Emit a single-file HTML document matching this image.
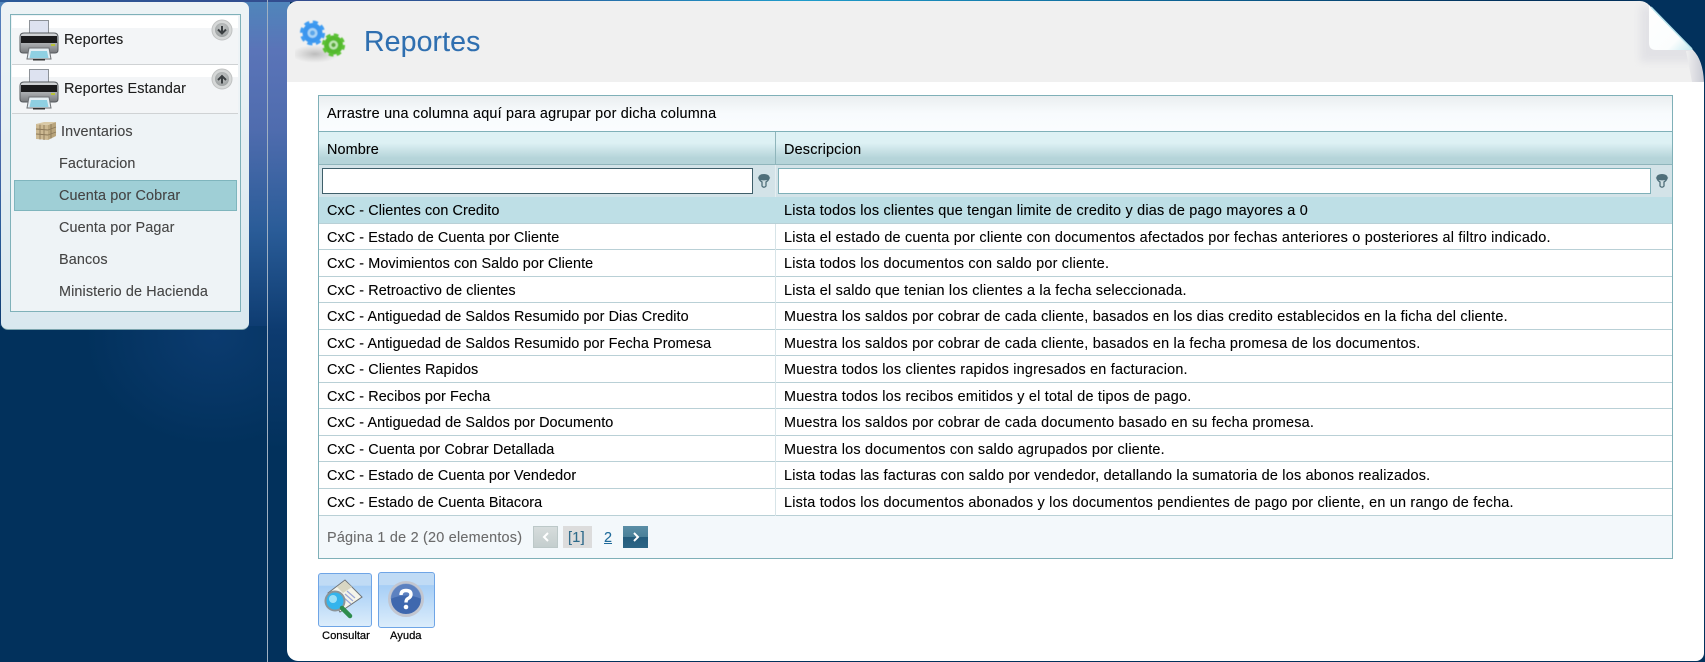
<!DOCTYPE html>
<html lang="es"><head><meta charset="utf-8"><title>Reportes</title>
<style>
html,body{margin:0;padding:0;width:1705px;height:662px;overflow:hidden;background:#02315c}
body{position:relative;font-family:"Liberation Sans",sans-serif;font-size:14.4px;color:#000}
.a{position:absolute}
.t{position:absolute;white-space:nowrap;line-height:18px;height:18px;-webkit-text-stroke:.1px currentColor}
.l{left:327px;letter-spacing:.08px}
.r{left:784px;letter-spacing:.22px}
.row{position:absolute;left:319px;width:1353px;border-bottom:1px solid #b9d0d6;background:#fff;box-sizing:border-box}
.m{color:#444;letter-spacing:.12px}
</style></head><body>
<div class="a" style="left:0;top:0;width:290px;height:662px;background:linear-gradient(180deg,#4f86bb 0,#5a74b8 50px,#4f6cae 130px,#2a5c98 230px,#0d3b70 330px,#02315c 450px)"></div>
<div class="a" style="left:0;top:326px;width:267px;height:336px;background:radial-gradient(ellipse 130px 110px at 215px 10px,#0b3b6f 0,#02315c 100%)"></div>
<div class="a" style="left:0;top:0;width:1705px;height:2px;background:linear-gradient(90deg,#2a5a98 0,#334c8e 300px,#2a5a9a 500px,#1f9ccb 800px,#0c5f90 1200px,#02315c 1500px)"></div>
<div class="a" style="left:267px;top:0;width:1px;height:662px;background:#9fb0c2"></div>

<!-- left panel -->
<div class="a" style="left:1px;top:2px;width:248px;height:328px;border-radius:7px;background:linear-gradient(180deg,#edf3f5,#d9e8ef);border-bottom:1px solid #7aa3ad;box-sizing:border-box"></div>
<div class="a" style="left:10px;top:14px;width:231px;height:298px;border:1px solid #7fb1b9;box-sizing:border-box;background:#eef3f6"></div>
<div class="a" style="left:12px;top:16px;width:226px;height:49px;background:linear-gradient(180deg,#fff 0,#fff 12px,#f3f5f7 12px);border-bottom:1px solid #cfd2d4;box-sizing:border-box"></div>
<div class="a" style="left:12px;top:65px;width:226px;height:49px;background:linear-gradient(180deg,#fff 0,#fff 12px,#f3f5f7 12px);border-bottom:1px solid #cfd2d4;box-sizing:border-box"></div>
<svg class="a" style="left:0;top:0" width="260" height="150" viewBox="0 0 260 150">
<defs>
<linearGradient id="bd" x1="0" y1="0" x2="0" y2="1"><stop offset="0" stop-color="#d8dadc"/><stop offset=".55" stop-color="#a8abae"/><stop offset="1" stop-color="#77797c"/></linearGradient>
<radialGradient id="rg" cx=".5" cy=".35" r=".7"><stop offset="0" stop-color="#c4c7c7"/><stop offset="1" stop-color="#9a9e9f"/></radialGradient>
<g id="pr">
<rect x="10.500" y="1.500" width="19" height="13" fill="#dde2f0" stroke="#8d9298"/>
<path d="M1 18 Q1 14 5 14 H35 Q39 14 39 18 V31 Q39 34 36 34 H4 Q1 34 1 31Z" fill="url(#bd)" stroke="#55595d"/>
<rect x="2" y="17" width="36" height="7" fill="#1a1a1c"/>
<rect x="32" y="25" width="4" height="2" fill="#b8c23a"/>
<path d="M10 29 H30 L32 40 H8Z" fill="#e6eff4" stroke="#6d7074"/>
<path d="M12 32 H28 L29.500 39 H10.500Z" fill="#8fd0e2"/>
<rect x="14" y="40" width="12" height="1.500" fill="#333"/>
</g>
<g id="rb"><circle r="10" fill="#d6d8d8" stroke="#c0c2c2"/><circle r="7" fill="url(#rg)"/></g>
</defs>
<use href="#pr" transform="translate(19,19)"/>
<use href="#pr" transform="translate(19,68)"/>
<use href="#rb" transform="translate(222,30)"/>
<path d="M222 26V33.500M218 29.500l4 4 4-4" fill="none" stroke="#3b3f42" stroke-width="2"/>
<use href="#rb" transform="translate(222,79)"/>
<path d="M222 83.500V76M218 80l4-4 4 4" fill="none" stroke="#3b3f42" stroke-width="2"/>
<g transform="translate(36,122)">
<path d="M0 2 L12 3 V18 L0 17Z" fill="#cdb992"/>
<path d="M12 3 L20 0 V14 L12 18Z" fill="#b8a47c"/>
<path d="M0 2 L8 0 L20 0 L12 3Z" fill="#d9c9a6"/>
<path d="M4 2.500V17.500 M8 3V18 M0 7 L12 8 M0 12 L12 13 M15 2V16.500 M12 8 L20 5 M12 13 L20 10" stroke="#8d7a5a" stroke-width=".9" fill="none"/>
</g>
</svg>
<div class="t m" style="left:64px;top:31px;color:#1c1c1c">Reportes</div>
<div class="t m" style="left:64px;top:80px;color:#1c1c1c">Reportes Estandar</div>
<div class="t m" style="left:61px;top:123px">Inventarios</div>
<div class="t m" style="left:59px;top:155px">Facturacion</div>
<div class="a" style="left:14px;top:180px;width:223px;height:31px;background:#9fcfd6;border:1px solid #7fb5bd;box-sizing:border-box"></div>
<div class="t m" style="left:59px;top:187px">Cuenta por Cobrar</div>
<div class="t m" style="left:59px;top:219px">Cuenta por Pagar</div>
<div class="t m" style="left:59px;top:251px">Bancos</div>
<div class="t m" style="left:59px;top:283px">Ministerio de Hacienda</div>

<!-- main panel -->
<div class="a" style="left:287px;top:1px;width:1417px;height:660px;background:#fff;border-radius:11px 0 8px 11px;overflow:hidden">
 <div class="a" style="left:0;top:0;width:1417px;height:81px;background:#f0f0f0"></div>
</div>
<svg class="a" style="left:1605px;top:0" width="100" height="90" viewBox="1605 0 100 90">
<defs>
<linearGradient id="fl" x1="0" y1="0" x2="1" y2="1"><stop offset="0" stop-color="#ffffff"/><stop offset="0.7" stop-color="#fbfdfd"/><stop offset="1" stop-color="#c4e9f0"/></linearGradient>
<linearGradient id="fe" x1="0" y1="0" x2="1" y2="0"><stop offset="0" stop-color="#f0f0f0"/><stop offset="1" stop-color="#c9cad4"/></linearGradient>
<filter id="bl" x="-30%" y="-30%" width="160%" height="160%"><feGaussianBlur stdDeviation="4"/></filter>
</defs>
<path d="M1640 6 H1650 L1696 52 V62 H1640Z" fill="#e2e2e6" filter="url(#bl)"/>
<path d="M1686 51 H1698 L1704 62 V82 H1692Z" fill="url(#fe)"/>
<path d="M1640 0H1705V82H1704Q1703 60 1693 50L1649 5Q1645 1 1640 1Z" fill="#02315c"/>
<path d="M1649 5 L1693 50 H1656 Q1649 50 1649 43Z" fill="url(#fl)"/>
<path d="M1651 7 L1692 49" stroke="#b6e3ec" stroke-width="1.500" fill="none"/>
</svg>
<svg class="a" style="left:295px;top:15px" width="60" height="50" viewBox="0 0 60 50">
<defs><radialGradient id="sh"><stop offset="0" stop-color="#888" stop-opacity=".5"/><stop offset="1" stop-color="#999" stop-opacity="0"/></radialGradient>
<filter id="gb" x="-20%" y="-20%" width="140%" height="140%"><feGaussianBlur stdDeviation=".45"/></filter></defs>
<ellipse cx="20" cy="39" rx="24" ry="9" fill="url(#sh)"/>
<g filter="url(#gb)">
<circle cx="17.500" cy="18" r="10" fill="#3a96ee"/>
<circle cx="17.500" cy="18" r="10.800" fill="none" stroke="#3f9cf2" stroke-width="3.500" stroke-dasharray="5 3.480"/>
<circle cx="17.500" cy="18" r="5" fill="#a9d4f6"/>
<circle cx="17.500" cy="18" r="2.500" fill="#5aa6ea"/>
<circle cx="38.500" cy="30" r="9.500" fill="#55b92f"/>
<circle cx="38.500" cy="30" r="10" fill="none" stroke="#5cc236" stroke-width="3.200" stroke-dasharray="4.600 3.250"/>
<circle cx="38.500" cy="30" r="4.500" fill="#bfe8b2"/>
<circle cx="38.500" cy="30" r="2.200" fill="#5aa83a"/>
</g>
</svg>
<div class="t" style="left:364px;top:24px;height:36px;line-height:36px;font-size:28.500px;color:#2f6fb0;letter-spacing:.1px">Reportes</div>

<!-- grid -->
<div class="a" style="left:318px;top:95px;width:1355px;height:464px;border:1px solid #7fb0b8;box-sizing:border-box;background:#f3f8fb"></div>
<div class="a" style="left:319px;top:96px;width:1353px;height:36px;background:linear-gradient(180deg,#eaeef0,#f8fbfd 50%,#fafcff);border-bottom:1px solid #7fb0b8;box-sizing:border-box"></div>
<div class="t" style="left:327px;top:105px;letter-spacing:.21px">Arrastre una columna aquí para agrupar por dicha columna</div>
<div class="a" style="left:319px;top:132px;width:1353px;height:33px;background:linear-gradient(180deg,#ddf1f4 0,#ddf1f4 11px,#b5d4d9 26px,#b5d4d9 100%);border-bottom:1px solid #8fb5bb;box-sizing:border-box"></div>
<div class="a" style="left:775px;top:132px;width:1px;height:33px;background:#8fb5bb"></div>
<div class="t" style="left:327px;top:141px;letter-spacing:.12px">Nombre</div>
<div class="t" style="left:784px;top:141px;letter-spacing:.2px">Descripcion</div>
<div class="a" style="left:319px;top:165px;width:1353px;height:32px;background:#d3e3e8"></div>
<div class="a" style="left:775px;top:165px;width:1px;height:32px;background:#e4eef1"></div>
<div class="a" style="left:322px;top:168px;width:431px;height:26px;background:#fff;border:1px solid #3f5f6a;box-sizing:border-box"></div>
<div class="a" style="left:778px;top:168px;width:873px;height:26px;background:#fff;border:1px solid #7fb0b8;box-sizing:border-box"></div>
<svg class="a" style="left:757px;top:173px" width="14" height="16" viewBox="0 0 14 16"><ellipse cx="7" cy="4" rx="5.500" ry="3" fill="#4f6f7a"/><path d="M2 5.500 Q3 8 5 9 V13 Q7 15.500 9 13 V9 Q11 8 12 5.500 Q7 8 2 5.500Z" fill="#cfdfe3" stroke="#4f6f7a" stroke-width="1.300"/></svg>
<svg class="a" style="left:1655px;top:173px" width="14" height="16" viewBox="0 0 14 16"><ellipse cx="7" cy="4" rx="5.500" ry="3" fill="#4f6f7a"/><path d="M2 5.500 Q3 8 5 9 V13 Q7 15.500 9 13 V9 Q11 8 12 5.500 Q7 8 2 5.500Z" fill="#cfdfe3" stroke="#4f6f7a" stroke-width="1.300"/></svg>

<div class="row" style="top:197px;height:27px;background:#bedfe6"></div>
<div class="row" style="top:224px;height:26px"></div>
<div class="row" style="top:250px;height:27px"></div>
<div class="row" style="top:277px;height:26px"></div>
<div class="row" style="top:303px;height:27px"></div>
<div class="row" style="top:330px;height:26px"></div>
<div class="row" style="top:356px;height:27px"></div>
<div class="row" style="top:383px;height:26px"></div>
<div class="row" style="top:409px;height:27px"></div>
<div class="row" style="top:436px;height:26px"></div>
<div class="row" style="top:462px;height:27px"></div>
<div class="row" style="top:489px;height:27px"></div>
<div class="a" style="left:775px;top:224px;width:1px;height:292px;background:#d7e4e8"></div>

<div class="t l" style="top:202px">CxC - Clientes con Credito</div><div class="t r" style="top:202px">Lista todos los clientes que tengan limite de credito y dias de pago mayores a 0</div>
<div class="t l" style="top:229px">CxC - Estado de Cuenta por Cliente</div><div class="t r" style="top:229px">Lista el estado de cuenta por cliente con documentos afectados por fechas anteriores o posteriores al filtro indicado.</div>
<div class="t l" style="top:255px">CxC - Movimientos con Saldo por Cliente</div><div class="t r" style="top:255px">Lista todos los documentos con saldo por cliente.</div>
<div class="t l" style="top:282px">CxC - Retroactivo de clientes</div><div class="t r" style="top:282px">Lista el saldo que tenian los clientes a la fecha seleccionada.</div>
<div class="t l" style="top:308px">CxC - Antiguedad de Saldos Resumido por Dias Credito</div><div class="t r" style="top:308px">Muestra los saldos por cobrar de cada cliente, basados en los dias credito establecidos en la ficha del cliente.</div>
<div class="t l" style="top:335px">CxC - Antiguedad de Saldos Resumido por Fecha Promesa</div><div class="t r" style="top:335px">Muestra los saldos por cobrar de cada cliente, basados en la fecha promesa de los documentos.</div>
<div class="t l" style="top:361px">CxC - Clientes Rapidos</div><div class="t r" style="top:361px">Muestra todos los clientes rapidos ingresados en facturacion.</div>
<div class="t l" style="top:388px">CxC - Recibos por Fecha</div><div class="t r" style="top:388px">Muestra todos los recibos emitidos y el total de tipos de pago.</div>
<div class="t l" style="top:414px">CxC - Antiguedad de Saldos por Documento</div><div class="t r" style="top:414px">Muestra los saldos por cobrar de cada documento basado en su fecha promesa.</div>
<div class="t l" style="top:441px">CxC - Cuenta por Cobrar Detallada</div><div class="t r" style="top:441px">Muestra los documentos con saldo agrupados por cliente.</div>
<div class="t l" style="top:467px">CxC - Estado de Cuenta por Vendedor</div><div class="t r" style="top:467px">Lista todas las facturas con saldo por vendedor, detallando la sumatoria de los abonos realizados.</div>
<div class="t l" style="top:494px">CxC - Estado de Cuenta Bitacora</div><div class="t r" style="top:494px">Lista todos los documentos abonados y los documentos pendientes de pago por cliente, en un rango de fecha.</div>

<!-- pager -->
<div class="t" style="left:327px;top:529px;color:#6b6b6b;letter-spacing:.23px">Página 1 de 2 (20 elementos)</div>
<div class="a" style="left:533px;top:526px;width:25px;height:22px;background:linear-gradient(180deg,#d6dcdc,#c4cece);border:1px solid #bcc8c8;box-sizing:border-box"></div>
<svg class="a" style="left:541px;top:531px" width="10" height="12"><path d="M7 2L3 6l4 4" fill="none" stroke="#fff" stroke-width="2"/></svg>
<div class="a" style="left:563px;top:526px;width:29px;height:22px;background:#dcdcdc"></div>
<div class="t" style="left:568px;top:529px;color:#2d6a8a;letter-spacing:.3px">[1]</div>
<div class="t" style="left:604px;top:529px;color:#1f6a9a;text-decoration:underline">2</div>
<div class="a" style="left:623px;top:526px;width:25px;height:22px;background:linear-gradient(180deg,#5a8ea6 0,#4a8098 50%,#245c7c 50%,#2c6585)"></div>
<svg class="a" style="left:631px;top:531px" width="10" height="12"><path d="M3 2l4 4-4 4" fill="none" stroke="#fff" stroke-width="2"/></svg>

<!-- buttons -->
<div class="a" style="left:318px;top:573px;width:54px;height:54px;border:1px solid #6fa5e6;border-radius:3px;box-sizing:border-box;background:linear-gradient(180deg,#c0dbf5 0,#c0dbf5 22%,#a6cef6 23%,#dcedfb 100%)"></div>
<svg class="a" style="left:324px;top:578px" width="44" height="44" viewBox="0 0 44 44">
<path d="M4 15 L21 2 L38 19 L16 34Z" fill="#f4f4ea" stroke="#6f7376"/>
<path d="M13 9 L21 3 L28 9 L19 15Z" fill="#d8d6c2"/>
<path d="M23 13l8 7M21 16l8 7M19 19l8 7" stroke="#9aa6d8" stroke-width="1.200"/>
<circle cx="11" cy="23" r="9.500" fill="#34b4ec" stroke="#8b9498" stroke-width="2"/>
<circle cx="9" cy="21" r="4" fill="#9be0f8"/>
<path d="M18 30l8 8" stroke="#2e8c4c" stroke-width="4.500" stroke-linecap="round"/>
</svg>
<div class="a" style="left:378px;top:572px;width:57px;height:56px;border:1px solid #6fa5e6;border-radius:3px;box-sizing:border-box;background:linear-gradient(180deg,#c0dbf5 0,#c0dbf5 22%,#a6cef6 23%,#dcedfb 100%)"></div>
<svg class="a" style="left:387px;top:580px" width="38" height="38" viewBox="0 0 38 38">
<circle cx="19" cy="19" r="16.500" fill="#3f68ae" stroke="#c2c6d0" stroke-width="3"/>
<path d="M3.500 19 A15.500 15.500 0 0 1 34.500 19 Q19 12 3.500 19Z" fill="#6f92cc" opacity=".6"/>
<path d="M14 15 Q14 10.500 19 10.500 Q24 10.500 24 14.500 Q24 17 21 18.500 Q19 19.500 19 22.500" fill="none" stroke="#fff" stroke-width="3.400"/>
<circle cx="19" cy="27" r="2.300" fill="#fff"/>
</svg>
<div class="t" style="left:322px;top:627px;font-size:11.200px;-webkit-text-stroke:.2px #000">Consultar</div>
<div class="t" style="left:390px;top:627px;font-size:11.200px;-webkit-text-stroke:.2px #000">Ayuda</div>
</body></html>
